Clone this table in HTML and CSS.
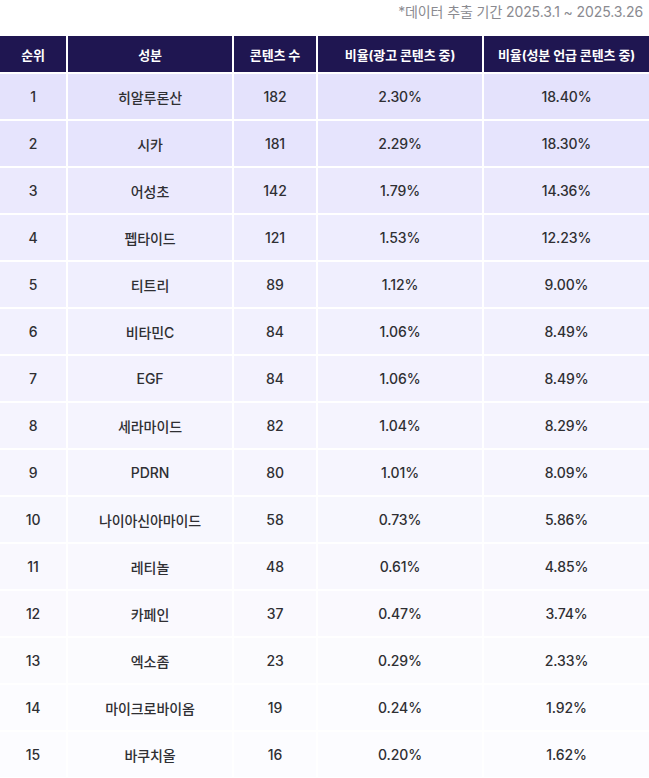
FILE: index.html
```html
<!DOCTYPE html>
<html lang="ko">
<head>
<meta charset="utf-8">
<link rel="stylesheet" href="styles.css">
</head>
<body>
<div class="wrap">
  <p class="caption">*데이터 추출 기간 2025.3.1 ~ 2025.3.26</p>
  <div class="table">
    <div class="row head">
      <div class="cell">순위</div>
      <div class="cell">성분</div>
      <div class="cell">콘텐츠 수</div>
      <div class="cell">비율(광고 콘텐츠 중)</div>
      <div class="cell">비율(성분 언급 콘텐츠 중)</div>
    </div>
    <div class="row r1"><div class="cell">1</div><div class="cell">히알루론산</div><div class="cell">182</div><div class="cell">2.30%</div><div class="cell">18.40%</div></div>
    <div class="row r2"><div class="cell">2</div><div class="cell">시카</div><div class="cell">181</div><div class="cell">2.29%</div><div class="cell">18.30%</div></div>
    <div class="row r3"><div class="cell">3</div><div class="cell">어성초</div><div class="cell">142</div><div class="cell">1.79%</div><div class="cell">14.36%</div></div>
    <div class="row r4"><div class="cell">4</div><div class="cell">펩타이드</div><div class="cell">121</div><div class="cell">1.53%</div><div class="cell">12.23%</div></div>
    <div class="row r5"><div class="cell">5</div><div class="cell">티트리</div><div class="cell">89</div><div class="cell">1.12%</div><div class="cell">9.00%</div></div>
    <div class="row r6"><div class="cell">6</div><div class="cell">비타민C</div><div class="cell">84</div><div class="cell">1.06%</div><div class="cell">8.49%</div></div>
    <div class="row r7"><div class="cell">7</div><div class="cell">EGF</div><div class="cell">84</div><div class="cell">1.06%</div><div class="cell">8.49%</div></div>
    <div class="row r8"><div class="cell">8</div><div class="cell">세라마이드</div><div class="cell">82</div><div class="cell">1.04%</div><div class="cell">8.29%</div></div>
    <div class="row r9"><div class="cell">9</div><div class="cell">PDRN</div><div class="cell">80</div><div class="cell">1.01%</div><div class="cell">8.09%</div></div>
    <div class="row r10"><div class="cell">10</div><div class="cell">나이아신아마이드</div><div class="cell">58</div><div class="cell">0.73%</div><div class="cell">5.86%</div></div>
    <div class="row r11"><div class="cell">11</div><div class="cell">레티놀</div><div class="cell">48</div><div class="cell">0.61%</div><div class="cell">4.85%</div></div>
    <div class="row r12"><div class="cell">12</div><div class="cell">카페인</div><div class="cell">37</div><div class="cell">0.47%</div><div class="cell">3.74%</div></div>
    <div class="row r13"><div class="cell">13</div><div class="cell">엑소좀</div><div class="cell">23</div><div class="cell">0.29%</div><div class="cell">2.33%</div></div>
    <div class="row r14"><div class="cell">14</div><div class="cell">마이크로바이옴</div><div class="cell">19</div><div class="cell">0.24%</div><div class="cell">1.92%</div></div>
    <div class="row r15"><div class="cell">15</div><div class="cell">바쿠치올</div><div class="cell">16</div><div class="cell">0.20%</div><div class="cell">1.62%</div></div>
  </div>
</div>
</body>
</html>
```

FILE: styles.css
```css
* { box-sizing: border-box; }
html, body { margin: 0; padding: 0; background: #ffffff; }
body {
  font-family: Inter, "Noto Sans CJK KR", "Noto Sans", sans-serif;
  color: #2f2f33;
  width: 649px;
  overflow: hidden;
}
.wrap { display: flex; flex-direction: column; }
.caption {
  margin: 0;
  height: 36px;
  padding: 2px 6px 0 0;
  text-align: right;
  font-size: 14px;
  line-height: 20px;
  color: #8a8a90;
  letter-spacing: -0.1px;
}
.table { display: flex; flex-direction: column; gap: 2px; }
.row {
  display: grid;
  grid-template-columns: 66px 164px 82px 164px 1fr;
  column-gap: 2px;
  height: 45px;
}
.cell {
  display: flex;
  align-items: center;
  justify-content: center;
  font-size: 14px;
  font-weight: 500;
  letter-spacing: -0.1px;
}
.head { height: 36px; }
.head .cell {
  background: #1f1651;
  color: #ffffff;
  font-size: 13px;
  font-weight: 700;
}
.r1 .cell { background: #e4e2fc; }
.r2 .cell { background: #e6e4fd; }
.r3 .cell { background: #ebe9fd; }
.r4 .cell { background: #eeedfe; }
.r5 .cell { background: #f0effe; }
.r6 .cell { background: #f2f1fe; }
.r7 .cell { background: #f3f2fe; }
.r8 .cell { background: #f5f4fe; }
.r9 .cell { background: #f6f5fe; }
.r10 .cell { background: #f7f7fe; }
.r11 .cell { background: #f9f8fe; }
.r12 .cell { background: #faf9fe; }
.r13 .cell { background: #fbfbfe; }
.r14 .cell { background: #fcfcff; }
.r15 .cell { background: #fcfcff; }
```
